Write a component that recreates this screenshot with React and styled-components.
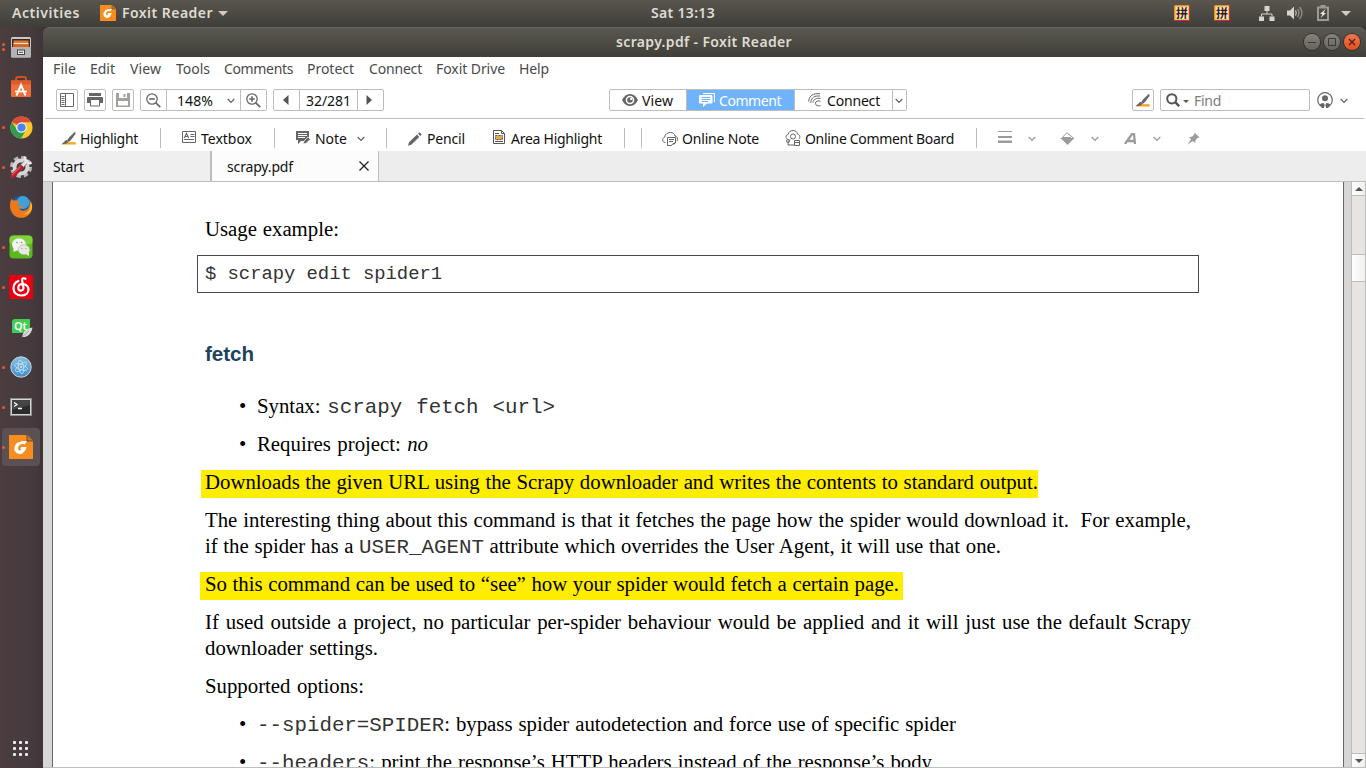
import React, { useLayoutEffect, useRef, useState } from 'react';
import styled, { createGlobalStyle, css } from 'styled-components';

const ui = '"Noto Sans", "Open Sans", sans-serif';
const serif = '"Liberation Serif", "Times New Roman", serif';
const mono = '"Liberation Mono", "Courier New", monospace';

const GlobalStyle = createGlobalStyle`
  * { box-sizing: border-box; }
  body { margin: 0; overflow: hidden; font-family: ${ui}; font-size: 14px; }
  svg { display: block; flex: none; }
`;

/* ---------- text set to a given measure ---------- */

const Measure = styled.span`
  display: block;
  flex: none;
  width: ${(p) => p.$w}px;
  margin-left: ${(p) => p.$ml || 0}px;
  white-space: pre;
`;

function Fit({ w, ml, by = 'letter', children, className }) {
  const ref = useRef(null);
  const [gap, setGap] = useState(0);
  useLayoutEffect(() => {
    const el = ref.current;
    const text = el.textContent;
    const count = by === 'word' ? text.split(' ').length - 1 : text.length;
    setGap((w - el.getBoundingClientRect().width) / Math.max(count, 1));
  }, [w, by]);
  const style = by === 'word' ? { wordSpacing: gap } : { letterSpacing: gap };
  return (
    <Measure $w={w} $ml={ml} className={className}>
      <span ref={ref} style={style}>{children}</span>
    </Measure>
  );
}

/* ---------- shell ---------- */

const Screen = styled.div`
  display: flex;
  flex-direction: column;
  width: 1366px;
  height: 768px;
  overflow: hidden;
  background: #453a3d;
`;
const TopBar = styled.header`
  display: flex;
  align-items: center;
  flex: none;
  height: 27px;
  padding: 0 0 1px 12px;
  background: linear-gradient(#59564f, #3f3e39);
  color: #dfdbd2;
  font-weight: 600;
  line-height: 26px;
`;
const Slot = styled.div`
  margin-left: ${(p) => p.$ml || 0}px;
  margin-top: ${(p) => p.$mt || 0}px;
  flex: none;
`;
const InputBadge = styled.div`
  flex: none;
  width: 16px;
  height: 16px;
  margin-left: ${(p) => p.$ml}px;
  border: 1px solid #f08a2a;
  border-right-color: #d8223c;
  border-bottom-color: #d8223c;
  border-radius: 2px;
  background: #f6ead2;
  box-shadow: inset 0 0 0 1px #f3c34a;
  color: #3a1a12;
  font: 700 12px/13px "Noto Sans CJK SC", sans-serif;
  text-align: center;
`;
const Desktop = styled.div`
  display: flex;
  flex: 1;
  min-height: 0;
`;
const Dock = styled.nav`
  display: flex;
  flex-direction: column;
  flex: none;
  width: 43px;
  background: linear-gradient(90deg, #4b3d40, #443a3d 80%, #3f3538);
`;
const DockItem = styled.div`
  position: relative;
  display: flex;
  align-items: center;
  justify-content: center;
  width: 38px;
  height: 38px;
  margin: 1px 0 1px 2px;
  border-radius: 4px;
  background: ${(p) => (p.$active ? '#5b5053' : 'transparent')};
`;
const Dots = styled.div`
  position: absolute;
  left: 0;
  top: 0;
  height: 38px;
  display: flex;
  flex-direction: column;
  justify-content: center;
  gap: 2px;
  i { width: 3px; height: 3px; border-radius: 50%; background: #f05a2a; }
`;
const AppsButton = styled.div`
  display: grid;
  grid-template-columns: repeat(3, 3px);
  gap: 3px;
  margin: auto 0 12px 13px;
  i { width: 3px; height: 3px; border-radius: 1px; background: #f4f2f2; }
`;
const Win = styled.section`
  display: flex;
  flex-direction: column;
  flex: 1;
  min-width: 0;
  background: #fff;
`;
const TitleBack = styled.div`
  flex: none;
  background: #35322f;
`;
const TitleBar = styled.div`
  display: flex;
  align-items: center;
  height: 30px;
  padding-bottom: 1px;
  border-top: 1px solid #66635b;
  border-radius: 6px 6px 0 0;
  background: linear-gradient(#5a5850, #3f3e38);
  color: #dfdbd2;
  font-weight: 600;
  line-height: 28px;
`;
const WinButton = styled.div`
  display: flex;
  align-items: center;
  justify-content: center;
  width: 16px;
  height: 16px;
  margin-left: ${(p) => p.$ml}px;
  border-radius: 50%;
  box-shadow: 0 0 0 1px #33322d;
  background: ${(p) => (p.$close ? 'linear-gradient(#f4764e, #e24e1c)' : 'linear-gradient(#85837b, #65635b)')};
`;
const MenuBar = styled.div`
  display: flex;
  flex: none;
  height: 25px;
  padding-left: 10px;
  color: #4a4a4a;
  line-height: 24px;
`;
const ToolBar = styled.div`
  display: flex;
  align-items: flex-start;
  flex: none;
  height: 37px;
  margin: 0 2px 0 2px;
  padding: 7px 0 0 11px;
  border-bottom: 1px solid #bdbdbd;
`;
const box = css`
  display: flex;
  align-items: center;
  flex: none;
  height: 22px;
  margin-left: ${(p) => p.$ml || 0}px;
  border: 1px solid #bdbdbd;
  border-radius: 2px;
  line-height: 21px;
  color: #111;
`;
const IconButton = styled.button`
  ${box}
  justify-content: center;
  width: 22px;
  padding: 0;
  background: #fff;
`;
const Group = styled.div`
  ${box}
`;
const Segment = styled.div`
  display: flex;
  align-items: center;
  height: 20px;
  width: ${(p) => p.$w}px;
  padding-left: ${(p) => p.$pl || 0}px;
  border-left: ${(p) => (p.$first ? 'none' : '1px solid #bdbdbd')};
  background: ${(p) => (p.$on ? '#6fb3fd' : 'transparent')};
  color: ${(p) => (p.$on ? '#fff' : '#111')};
`;
const Search = styled.div`
  ${box}
  width: 150px;
  padding-left: 5px;
  color: #7d7d7d;
`;
const CommentBar = styled.div`
  display: flex;
  align-items: center;
  flex: none;
  height: 32px;
  padding: 7px 0 0 18px;
  color: #111;
  line-height: 24px;
`;
const Rule = styled.div`
  flex: none;
  align-self: center;
  width: 1px;
  height: 20px;
  margin: -1px 0 0 ${(p) => p.$ml}px;
  background: #bdbdbd;
`;
const Tabs = styled.div`
  display: flex;
  flex: none;
  height: 31px;
  border-bottom: 1px solid #bdbdbd;
  background: #ededed;
  color: #111;
  line-height: 31px;
`;
const Tab = styled.div`
  display: flex;
  align-items: center;
  width: ${(p) => p.$w}px;
  padding-left: ${(p) => p.$pl}px;
  border-right: ${(p) => p.$edge}px solid #bdbdbd;
  background: ${(p) => (p.$active ? '#fcfcfc' : '#efefef')};
`;

/* ---------- document ---------- */

const Viewer = styled.div`
  display: flex;
  flex: 1;
  min-height: 0;
  border-bottom: 1px solid #bdbdbd;
  background: #d6d6d6;
`;
const Page = styled.article`
  width: 1292px;
  height: 585px;
  margin-left: 9px;
  padding: 34px 0 0 152px;
  overflow: hidden;
  border: solid #686868;
  border-width: 0 1px;
  background: #fff;
  color: #000;
  font: 20.8px/26px ${serif};
`;
const Line = styled.div`
  height: 26px;
  margin: ${(p) => p.$mt || 0}px 0 0 0;
`;
const CodeBox = styled.pre`
  width: 1002px;
  height: 38px;
  margin: 13px 0 0 -8px;
  padding-left: 7px;
  border: 1px solid #4a4a4a;
  font: 18.9px/37px ${mono};
  color: #333;
`;
const Heading = styled.h3`
  height: 26px;
  margin: 48px 0 0;
  color: #20435c;
  font: 700 20.6px/26px "Liberation Sans", Arial, sans-serif;
`;
const Bullet = styled.div`
  display: flex;
  height: 26px;
  margin: ${(p) => p.$mt}px 0 0 34px;
`;
const Mark = styled.span`
  flex: none;
  width: 18px;
`;
const Mono = styled.code`
  font: 20.8px/20px ${mono};
  color: #333;
`;
const Highlighted = styled.div`
  width: ${(p) => p.$w}px;
  height: 28px;
  margin: ${(p) => p.$mt}px 0 ${(p) => p.$mb}px ${(p) => -p.$out}px;
  padding-left: ${(p) => p.$out}px;
  background: #ffed00;
  line-height: 24px;
`;

const ScrollBar = styled.div`
  display: flex;
  flex-direction: column;
  width: 15px;
  margin-left: 7px;
  border: solid #bdbdbd;
  border-width: 0 1px;
  background: #e7e4e2;
`;
const ScrollPart = styled.div`
  display: flex;
  align-items: center;
  justify-content: center;
  flex: none;
  height: ${(p) => p.$h}px;
  margin-top: ${(p) => p.$mt || 0};
  border: solid #bdbdbd;
  border-width: ${(p) => p.$b};
  background: linear-gradient(90deg, #fff, #f1f0ee);
`;

/* ---------- drawings ---------- */

const Chevron = ({ c = '#666', w = 8 }) => (
  <svg width={w} height="6" viewBox="0 0 8 6" fill="none" stroke={c} strokeWidth="1.3"><path d="M.7 1 4 4.4 7.3 1" /></svg>
);
const Triangle = ({ d, w, h, c = '#555' }) => (
  <svg width={w} height={h} fill={c}><path d={d} /></svg>
);
const FoxitIcon = ({ s }) => (
  <svg width={s} height={s} viewBox="0 0 24 24">
    <path d="M0 0h17.500v6.500H24V24H0z" fill="#f78d1f" />
    <path d="M18.500 0 24 5.500h-5.500z" fill="#c9741f" />
    <ellipse cx="11" cy="13" rx="5.600" ry="6.200" transform="rotate(25 11 13)" fill="#fff" />
    <path d="M10 7.500C12.500 6 15 5.700 18 6.200L15.500 9.500z" fill="#fff" />
    <path d="M15 9.300c-2.800-.9-5.300.5-5.900 3-.4 1.800.4 3.200 1.700 3.200.8 0 1.400-.5 1.700-1.300h-1.300l.7-2h5.500V9.500z" fill="#f78d1f" />
    <path d="M12.300 12H17.500L16.500 15l-4-.5z" fill="#fff" />
  </svg>
);
const FilesIcon = () => (
  <svg width="22" height="22" viewBox="0 0 22 22">
    <rect x="1" y="1" width="20" height="20.500" rx="1.500" fill="#c8c8c8" />
    <rect x="2" y="3" width="18" height="8" fill="#3b2a22" />
    <rect x="3.500" y="4.500" width="15" height="3" fill="#e8762c" />
    <rect x="3.500" y="7" width="15" height="1.500" fill="#f6e3cf" />
    <rect x="3" y="8.500" width="16" height="3" fill="#d9631f" />
    <rect x="1" y="11" width="20" height="10.500" rx="1" fill="#b3b3b3" />
    <rect x="7.500" y="14" width="7" height="4.500" fill="#eee" stroke="#444" />
    <path d="M9 16.300h4" stroke="#444" />
  </svg>
);
const StoreIcon = () => (
  <svg width="22" height="24" viewBox="0 0 22 24">
    <path d="M6 7V4q0-2 2-2h6q2 0 2 2v3" fill="none" stroke="#d4511f" strokeWidth="2" />
    <rect x="1" y="5.500" width="20" height="16.500" rx="1" fill="#ef6f37" />
    <rect x="1" y="5.500" width="20" height="4" fill="#de5c28" />
    <path d="M6.500 20.500 11 10l4.500 10.500" fill="none" stroke="#fff" strokeWidth="2" />
    <path d="M5 16.500h12" stroke="#fff" strokeWidth="1.600" />
  </svg>
);
const ChromeIcon = () => (
  <svg width="23" height="23" viewBox="0 0 24 24">
    <circle cx="12" cy="12" r="11.500" fill="#fbc926" />
    <path d="M12 12 2 6.200A11.500 11.500 0 0 1 22 6.500H12z" fill="#dc4a38" />
    <path d="M2 6.200A11.500 11.500 0 0 0 11.500 23.500L16.700 14.700 12 12 7.300 14.700z" fill="#2f9e55" />
    <circle cx="12" cy="12" r="5.500" fill="#f4f4f4" />
    <circle cx="12" cy="12" r="4.300" fill="#4a86e8" />
  </svg>
);
const SettingsIcon = () => (
  <svg width="24" height="24" viewBox="0 0 24 24">
    <circle cx="12" cy="12" r="8.500" fill="none" stroke="#b9b9b9" strokeWidth="5" strokeDasharray="4 2.670" />
    <circle cx="12" cy="12" r="6.500" fill="none" stroke="#d6d6d6" strokeWidth="4" />
    <path d="m11 13 8-8" stroke="#777" strokeWidth="4.500" />
    <path d="m11 13 8-8" stroke="#e8e8e8" strokeWidth="3" />
    <path d="M16.500 1.500a4.500 4.500 0 0 0 6 6" stroke="#e8e8e8" strokeWidth="2.500" fill="none" />
    <path d="m3.500 21 8.500-8.500" stroke="#b5202a" strokeWidth="4.500" strokeLinecap="round" />
    <path d="m3 20 8-8" stroke="#e25a5a" strokeWidth="1.200" />
  </svg>
);
const FirefoxIcon = () => (
  <svg width="24" height="24" viewBox="0 0 24 24">
    <circle cx="12" cy="11" r="10.500" fill="#1b5a9c" />
    <circle cx="14" cy="7.500" r="6.500" fill="#3f9fdc" />
    <path d="M2.500 3.500C.5 7.500.6 12.500 2 16 4.500 22 11 24 16 22.200c5-1.800 8-6.700 7-12.200-.5-2.500-1.500-4-2.700-5.200C21.500 9.500 20 13.500 17 15c-3 1.400-6 .3-7-1.500 2 .5 3.500-.5 4.500-1.500-1.500-1.500-4-.5-5.500-1-1-.5-.8-2 1-2.500 1-.3 1-1.500-.5-2.500-1.500-.8-3.500-.8-4.500-.3C3.700 5 3 4.500 2.500 3.500z" fill="#ec7a1d" />
    <path d="M21.500 7.500c.8 6-2.500 11-8 12 5 .8 10-3 9.500-9-.2-1.500-.7-2.300-1.500-3z" fill="#f9bf2b" />
  </svg>
);
const WechatIcon = () => (
  <svg width="24" height="24" viewBox="0 0 24 24">
    <rect x=".5" y=".5" width="23" height="23" rx="4" fill="#5cb81f" />
    <rect x=".5" y=".5" width="23" height="9" rx="4" fill="#7fd23c" />
    <ellipse cx="10" cy="9.500" rx="7" ry="6.300" fill="#f3f3ef" />
    <path d="m4.500 12 0 5 4-2z" fill="#f3f3ef" />
    <ellipse cx="15" cy="14.800" rx="5.800" ry="5" fill="#e9e9e4" stroke="#9ab37e" strokeWidth=".6" />
    <path d="m16.500 19 3.500 2v-4z" fill="#e9e9e4" />
    <g fill="#888"><circle cx="8" cy="7.500" r=".8" /><circle cx="12.500" cy="7.500" r=".8" /><circle cx="13" cy="13.500" r=".6" /><circle cx="17" cy="13.500" r=".6" /></g>
  </svg>
);
const NeteaseIcon = () => (
  <svg width="24" height="24" viewBox="0 0 24 24">
    <rect width="24" height="24" fill="#e60012" />
    <path d="M16.500 3.800c-2-1.200-3.800-.2-3.400 1.700l1.300 6.500c.4 2.200-.8 3.700-2.500 3.700s-2.800-1.200-2.600-3.200c.2-2 2-3.500 4.500-3.400 3.500.2 5.700 2.500 5.700 5.400 0 3.700-3 6-7.200 6-4.500 0-7.800-3-7.800-7.300 0-3.500 1.900-6 4.900-7.200" fill="none" stroke="#fff" strokeWidth="2.200" strokeLinecap="round" />
  </svg>
);
const QtLabel = styled.div`
  width: 18px;
  height: 14px;
  margin: -2px 1px 0 0;
  border-radius: 3px 0 0 0;
  background: #41cd52;
  color: #fff;
  font: 600 11px/14px ${ui};
  text-align: center;
`;
const Feather = styled.svg`
  position: absolute;
  left: 19px;
  top: 19px;
`;
const AtomIcon = () => (
  <svg width="22" height="22" viewBox="0 0 22 22">
    <defs><linearGradient id="at" x2="0" y2="1"><stop stopColor="#84c1e6" /><stop offset="1" stopColor="#4389c6" /></linearGradient></defs>
    <circle cx="11" cy="11" r="10.200" fill="url(#at)" stroke="#c9d7df" strokeWidth="1" />
    <g fill="none" stroke="#c4e4f7" strokeWidth=".8">
      <ellipse cx="11" cy="11" rx="6.800" ry="2.600" transform="rotate(20 11 11)" />
      <ellipse cx="11" cy="11" rx="6.800" ry="2.600" transform="rotate(80 11 11)" />
      <ellipse cx="11" cy="11" rx="6.800" ry="2.600" transform="rotate(140 11 11)" />
    </g>
    <circle cx="11" cy="11" r=".9" fill="#e8f5fd" />
  </svg>
);
const TerminalIcon = () => (
  <svg width="22" height="18" viewBox="0 0 22 18">
    <rect x=".5" y=".5" width="21" height="17" fill="#d6d6d4" stroke="#8d8d8a" />
    <rect x="2" y="2" width="18" height="14" fill="#2b2b2b" />
    <path d="M2 2h18v5L2 12z" fill="#444" />
    <path d="m4 4.500 3 2-3 2M8 10.500h4" fill="none" stroke="#fff" strokeWidth="1.300" />
  </svg>
);
const Marker = () => (
  <svg width="16" height="14" viewBox="0 0 16 14">
    <path d="M3 11.300h11.700v2.200H1z" fill="#f9a11b" />
    <path d="M14.200.5 8 6.500l-2 3 1.800 1.600 2.400-2.400L14.500 3z" fill="#666" />
    <path d="m5.300 8.700-2.600 2.600L.5 13.300l4.500-.6L7.500 11z" fill="#666" />
  </svg>
);
const PanelIcon = () => (
  <svg width="14" height="14" fill="none" stroke="#666"><path d="M.5.500h13v13H.5zM5.500.500v13M1.500 3.500h3M1.500 5.500h3M1.500 7.500h3M1.500 9.500h3M1.500 11.500h3" /></svg>
);
const PrinterIcon = () => (
  <svg width="16" height="14">
    <path d="M2 0h12v3H2z" fill="#666" /><path d="M0 5q0-1 1-1h14q1 0 1 1v5h-3V7H3v3H0z" fill="#666" />
    <path d="M3.500 6.500h9v6.500h-9z" fill="#fff" stroke="#666" />
  </svg>
);
const SaveIcon = () => (
  <svg width="14" height="14"><path d="M0 0h14v14H0z" fill="#a3a19a" /><path d="M3 0h8v5H3zM2 8h10v4.500H2z" fill="#fff" /><path d="M7.500 1h2v3h-2z" fill="#a3a19a" /></svg>
);
const ZoomIcon = ({ plus }) => (
  <svg width="15" height="15" fill="none" stroke="#666" strokeWidth="1.300">
    <circle cx="6" cy="6" r="5.200" /><path d="m9.800 9.800 4.500 4.300" strokeWidth="1.700" /><path d={plus ? 'M3.200 6h5.600M6 3.200v5.600' : 'M3.200 6h5.600'} strokeWidth="1.600" />
  </svg>
);
const EyeIcon = () => (
  <svg width="16" height="12" viewBox="0 0 16 12">
    <path d="M0 6Q3 0 8 0t8 6q-3 6-8 6T0 6z" fill="#666" /><circle cx="8" cy="6" r="4.300" fill="#fff" /><circle cx="8" cy="6" r="2.800" fill="#666" /><circle cx="9.300" cy="4.900" r="1.200" fill="#fff" />
  </svg>
);
const BubblesIcon = () => (
  <svg width="16" height="14">
    <path d="M4 .5h11.500V9" fill="none" stroke="#fff" strokeWidth="1.200" />
    <path d="M0 3q0-1 1-1h11.500q1 0 1 1v6.500q0 1-1 1H8L4 14v-3.500H1q-1 0-1-1z" fill="#fff" />
    <path d="M2.500 4.500H11M2.500 6.500H11M2.500 8.500H9" stroke="#6fb3fd" />
  </svg>
);
const ConnectIcon = () => (
  <svg width="13" height="14" fill="none" stroke="#666" strokeWidth="1">
    <path d="M.7 8.500C.8 4 4 .7 9 .7h3M2.800 10C2.800 6 5.500 3 9.500 3H12M12.500 5.500C8.500 4.500 5.300 6.500 5 9.500M12.500 8.300c-2.500-1-5-.3-5 2s2.500 3.300 5 2.200" />
  </svg>
);
const SearchIcon = () => (
  <svg width="14" height="14" fill="none" stroke="#555" strokeWidth="2"><circle cx="5.800" cy="5.800" r="4.600" /><path d="m9.200 9.200 4 4" strokeWidth="2.400" /></svg>
);
const UserIcon = () => (
  <svg width="16" height="17" viewBox="0 0 16 17">
    <circle cx="8" cy="8" r="7.300" fill="none" stroke="#666" strokeWidth="1.200" /><circle cx="8" cy="6.200" r="3" fill="#666" />
    <path d="M2.500 13q1-2 4-2L8 13l1.500-2q3 0 4 2L11 16H5z" fill="#666" /><path d="m8 11.500 1.200 5H6.800z" fill="#fff" />
  </svg>
);
const TextboxIcon = () => (
  <svg width="14" height="12" fill="none" stroke="#666">
    <path d="M.5.500h13v11H.5zM8.500 3.500h4M8.500 5.500h4M2 8.500h10" /><path d="M2.300 7 4.500 2.200 6.700 7M3 5.500h3" strokeWidth="1.100" />
  </svg>
);
const NoteIcon = () => (
  <svg width="15" height="14">
    <path d="M0 0h13v7.500L8 10H5l-3 3V9H0z" fill="#666" /><path d="M2 2.500h9M2 4.500h9M2 6.500h7" stroke="#fff" />
    <path d="m7 13 1-3 4-4 2.500 2.300-4.300 4z" fill="#666" stroke="#fff" strokeWidth=".7" />
  </svg>
);
const PencilIcon = () => (
  <svg width="14" height="14" fill="#666"><path d="m0 13.800 1-3.500 8-7.700L11.300 5l-8 7.700zM10 1.800 11.500.3l2.300 2.200L12.200 4z" /></svg>
);
const AreaIcon = () => (
  <svg width="12" height="14" fill="none" stroke="#555">
    <path d="M.5.500h8l3 3v10H.5z" /><path d="M8.500.500v3h3M2 3.500h4M2 11.500h8" /><rect x="2.500" y="5.500" width="7" height="4" fill="#e9a93c" strokeDasharray="2 1" />
  </svg>
);
const CloudNoteIcon = () => (
  <svg width="16" height="14" fill="none" stroke="#666">
    <path d="M3.500 10.500H3C0 10-.2 6 2.600 5.200 2.800 2 6 .5 8.500.5s4.300 1.500 4.500 3.500c2.500.3 3 3 2 5" />
    <path d="M5.500 5.500h8v5l-3 1.500-1 1.500h-4zM7 7.500h5M7 9.500h4M11 12.500l3-2" />
  </svg>
);
const CloudBoardIcon = () => (
  <svg width="16" height="16" fill="none" stroke="#666">
    <path d="M3 9.500C.2 8.500.2 5 3 4.500 3.500 2 5.500.5 8 .5s4 1.500 4.500 3.500c2.500.8 3 3 1.500 5" />
    <circle cx="8" cy="6.500" r="2.500" /><path d="M5.500 9.500c-2 1-2.500 3-2.500 5.500h6" /><circle cx="3" cy="11" r="1.500" />
    <path d="M9.500 10.500h5v5h-5zM9.500 12.500h5" />
  </svg>
);
const BucketIcon = () => (
  <svg width="15" height="13"><path d="M1 6.500h13L7.500 13z" fill="#9b9b9b" /><path d="M.5 6.500h13.500L7 .8 2 5.500h9" fill="none" stroke="#9b9b9b" /></svg>
);
const PinIcon = () => (
  <svg width="13" height="13" fill="#9b9b9b"><path d="m7.300.5 5.200 5-2 .4-2 2.200-.3 3L5.800 9 .5 12.700 4 7.200 2 5l3-.3 2.300-2.200z" /></svg>
);
const NetworkIcon = () => (
  <svg width="16" height="15"><path d="M5.500 0h5v5h-5zM0 10.500h5V15H0zM10.500 10.500h5V15h-5z" fill="#d8d5ce" /><path d="M8 5v3M2.500 10.500V8H13v2.500" fill="none" stroke="#d8d5ce" /></svg>
);
const VolumeIcon = () => (
  <svg width="16" height="14" fill="none"><path d="M0 4.500h3L7 .5v13l-4-4H0z" fill="#d8d5ce" /><path d="M8.500 4.500q1.500 2.500 0 5" stroke="#c8c5be" strokeWidth="1.300" /><path d="M10.500 3q3 4 0 8M12.500 1q5 6 0 12" stroke="#918f87" strokeWidth="1.300" /></svg>
);
const BatteryIcon = () => (
  <svg width="12" height="16"><path d="M1 2.500h10v12.500H1z" fill="none" stroke="#9c9a92" strokeWidth="2" /><path d="M3.500 0h5v2h-5z" fill="#9c9a92" /><path d="M8.500 4 3 9h2.500L3.500 13 9 8H6.500z" fill="#eee" /></svg>
);

/* ---------- page ---------- */

const dock = [
  { icon: <FilesIcon />, dots: 2 },
  { icon: <StoreIcon />, dots: 0 },
  { icon: <ChromeIcon />, dots: 1 },
  { icon: <SettingsIcon />, dots: 1 },
  { icon: <FirefoxIcon />, dots: 0 },
  { icon: <WechatIcon />, dots: 1 },
  { icon: <NeteaseIcon />, dots: 1 },
  {
    icon: (
      <>
        <QtLabel>Qt</QtLabel>
        <Feather width="12" height="11"><path d="M11.500.5C6 1.500 2 4 1 10c5 .5 9-2 10.500-9.500z" fill="#d9d9d9" /><path d="M.5 10.500 8 4" stroke="#888" strokeWidth=".7" /></Feather>
      </>
    ),
    dots: 0,
  },
  { icon: <AtomIcon />, dots: 1 },
  { icon: <TerminalIcon />, dots: 1 },
  { icon: <FoxitIcon s={24} />, dots: 1, active: true },
];
const menu = [
  ['File', 0, 23], ['Edit', 14, 25], ['View', 15, 31], ['Tools', 15, 34], ['Comments', 14, 69],
  ['Protect', 14, 47], ['Connect', 15, 53], ['Foxit Drive', 14, 69], ['Help', 14, 30],
];

export default function App() {
  return (
    <Screen>
      <GlobalStyle />
      <TopBar>
        <Fit w={68}>Activities</Fit>
        <Slot $ml={20}><FoxitIcon s={16} /></Slot>
        <Fit ml={6} w={91}>Foxit Reader</Fit>
        <Slot $ml={5}><Triangle w={10} h={5} d="M0 0h10L5 5z" c="#d0cdc6" /></Slot>
        <Fit ml={423} w={64}>Sat 13:13</Fit>
        <InputBadge $ml={459}>拼</InputBadge>
        <InputBadge $ml={24}>拼</InputBadge>
        <Slot $ml={29}><NetworkIcon /></Slot>
        <Slot $ml={12}><VolumeIcon /></Slot>
        <Slot $ml={14}><BatteryIcon /></Slot>
        <Slot $ml={12}><Triangle w={10} h={5} d="M0 0h10L5 5z" c="#d0cdc6" /></Slot>
      </TopBar>
      <Desktop>
        <Dock>
          {dock.map((d, i) => (
            <DockItem key={i} $active={d.active}>
              <Dots>{Array.from({ length: d.dots }, (_, k) => <i key={k} />)}</Dots>
              {d.icon}
            </DockItem>
          ))}
          <AppsButton>{Array.from({ length: 9 }, (_, k) => <i key={k} />)}</AppsButton>
        </Dock>
        <Win>
          <TitleBack>
            <TitleBar>
              <Fit ml={573} w={176}>scrapy.pdf - Foxit Reader</Fit>
              <WinButton $ml={512}><svg width="8" height="8" stroke="#3b3a35"><path d="M0 4.500h8" /></svg></WinButton>
              <WinButton $ml={4}><svg width="8" height="8" fill="none" stroke="#3b3a35"><path d="M.5.500h7v7h-7z" /></svg></WinButton>
              <WinButton $ml={4} $close><svg width="8" height="8" stroke="#4a2212" strokeWidth="1.300"><path d="m1 1 6 6M7 1 1 7" /></svg></WinButton>
            </TitleBar>
          </TitleBack>
          <MenuBar>{menu.map(([t, ml, w]) => <Fit key={t} ml={ml} w={w}>{t}</Fit>)}</MenuBar>
          <ToolBar>
            <IconButton><PanelIcon /></IconButton>
            <IconButton $ml={6}><PrinterIcon /></IconButton>
            <IconButton $ml={6}><SaveIcon /></IconButton>
            <Group $ml={6}>
              <Segment $first $w={25} $pl={5}><ZoomIcon /></Segment>
              <Segment $w={74} $pl={10}><Fit w={36}>148%</Fit><Slot $ml={14} $mt={1}><Chevron /></Slot></Segment>
              <Segment $w={26} $pl={5}><ZoomIcon plus /></Segment>
            </Group>
            <Group $ml={6}>
              <Segment $first $w={25} $pl={9}><Triangle w={6} h={10} d="M5.500 0v10L0 5z" /></Segment>
              <Segment $w={58} $pl={6}><Fit w={45}>32/281</Fit></Segment>
              <Segment $w={26} $pl={8}><Triangle w={6} h={10} d="M.5 0v10L6 5z" /></Segment>
            </Group>
            <Group $ml={225}>
              <Segment $first $w={76} $pl={12}><EyeIcon /><Fit ml={4} w={31}>View</Fit></Segment>
              <Segment $w={108} $pl={12} $on><BubblesIcon /><Fit ml={4} w={62}>Comment</Fit></Segment>
              <Segment $w={98} $pl={13}><ConnectIcon /><Fit ml={6} w={53}>Connect</Fit></Segment>
              <Segment $w={14} $pl={2}><Slot $mt={1}><Chevron /></Slot></Segment>
            </Group>
            <IconButton $ml={225}><Marker /></IconButton>
            <Search $ml={6}>
              <SearchIcon />
              <Slot $ml={3} $mt={2}><Triangle w={6} h={3} d="M0 0h6L3 3z" /></Slot>
              <Fit ml={5} w={27}>Find</Fit>
            </Search>
            <Slot $ml={7} $mt={3}><UserIcon /></Slot>
            <Slot $ml={7} $mt={9}><Chevron /></Slot>
          </ToolBar>
          <CommentBar>
            <Slot $mt={-2}><Marker /></Slot><Fit ml={3} w={58}>Highlight</Fit><Rule $ml={22} />
            <Slot $ml={21} $mt={-3}><TextboxIcon /></Slot><Fit ml={5} w={51}>Textbox</Fit><Rule $ml={22} />
            <Slot $ml={21} $mt={-1}><NoteIcon /></Slot><Fit ml={4} w={32}>Note</Fit><Slot $ml={10}><Chevron /></Slot><Rule $ml={21} />
            <Slot $ml={21}><PencilIcon /></Slot><Fit ml={5} w={38}>Pencil</Fit>
            <Slot $ml={28} $mt={-3}><AreaIcon /></Slot><Fit ml={6} w={91}>Area Highlight</Fit><Rule $ml={22} /><Rule $ml={16} />
            <Slot $ml={20}><CloudNoteIcon /></Slot><Fit ml={4} w={77}>Online Note</Fit>
            <Slot $ml={26} $mt={-1}><CloudBoardIcon /></Slot><Fit ml={4} w={149}>Online Comment Board</Fit><Rule $ml={22} />
            <Slot $ml={21} $mt={-3}><svg width="14" height="12" fill="#9b9b9b"><path d="M0 0h14v1H0zM0 5h14v2H0zM0 9.500h14v2.500H0z" /></svg></Slot>
            <Slot $ml={16}><Chevron c="#9b9b9b" /></Slot>
            <Slot $ml={24}><BucketIcon /></Slot><Slot $ml={16}><Chevron c="#9b9b9b" /></Slot>
            <Slot $ml={25} $mt={-1}><svg width="13" height="11" fill="none" stroke="#9b9b9b" strokeWidth="2.300"><path d="M1 11 8 1h2l1 10M4 8h6.500" /></svg></Slot>
            <Slot $ml={16}><Chevron c="#9b9b9b" /></Slot>
            <Slot $ml={26}><PinIcon /></Slot>
          </CommentBar>
          <Tabs>
            <Tab $w={169} $pl={10} $edge={2}><Fit w={31}>Start</Fit></Tab>
            <Tab $w={167} $pl={15} $edge={1} $active>
              <Fit w={66}>scrapy.pdf</Fit>
              <Slot $ml={66}><svg width="10" height="10" stroke="#222" strokeWidth="1.300"><path d="m.5.500 9 9M9.500.500l-9 9" /></svg></Slot>
            </Tab>
          </Tabs>
          <Viewer>
            <Page>
              <Line><Fit by="word" w={134}>Usage example:</Fit></Line>
              <CodeBox><Fit w={237}>$ scrapy edit spider1</Fit></CodeBox>
              <Heading><Fit w={49}>fetch</Fit></Heading>
              <Bullet $mt={26}><Mark>•</Mark><Fit by="word" w={298}>Syntax: <Mono>scrapy fetch &lt;url&gt;</Mono></Fit></Bullet>
              <Bullet $mt={12}><Mark>•</Mark><Fit by="word" w={171}>Requires project: <i>no</i></Fit></Bullet>
              <Highlighted $w={837} $out={4} $mt={13} $mb={9}><Fit by="word" w={833}>Downloads the given URL using the Scrapy downloader and writes the contents to standard output.</Fit></Highlighted>
              <Line><Fit by="word" w={986}>The interesting thing about this command is that it fetches the page how the spider would download it.  For example,</Fit></Line>
              <Line><Fit by="word" w={796}>if the spider has a <Mono>USER_AGENT</Mono> attribute which overrides the User Agent, it will use that one.</Fit></Line>
              <Highlighted $w={703} $out={5} $mt={13} $mb={9}><Fit by="word" w={694}>So this command can be used to “see” how your spider would fetch a certain page.</Fit></Highlighted>
              <Line><Fit by="word" w={986}>If used outside a project, no particular per-spider behaviour would be applied and it will just use the default Scrapy</Fit></Line>
              <Line><Fit by="word" w={173}>downloader settings.</Fit></Line>
              <Line $mt={12}><Fit by="word" w={159}>Supported options:</Fit></Line>
              <Bullet $mt={12}><Mark>•</Mark><Fit by="word" w={699}><Mono>--spider=SPIDER</Mono>: bypass spider autodetection and force use of specific spider</Fit></Bullet>
              <Bullet $mt={12}><Mark>•</Mark><Fit by="word" w={675}><Mono>--headers</Mono>: print the response’s HTTP headers instead of the response’s body</Fit></Bullet>
            </Page>
            <ScrollBar>
              <ScrollPart $h={14} $b="0 0 1px"><Triangle w={8} h={4} d="M4 0 8 4H0z" /></ScrollPart>
              <ScrollPart $h={28} $mt="58px" $b="1px 0"><span /></ScrollPart>
              <ScrollPart $h={14} $mt="auto" $b="1px 0 0"><Triangle w={8} h={4} d="M0 0h8L4 4z" /></ScrollPart>
            </ScrollBar>
          </Viewer>
        </Win>
      </Desktop>
    </Screen>
  );
}
